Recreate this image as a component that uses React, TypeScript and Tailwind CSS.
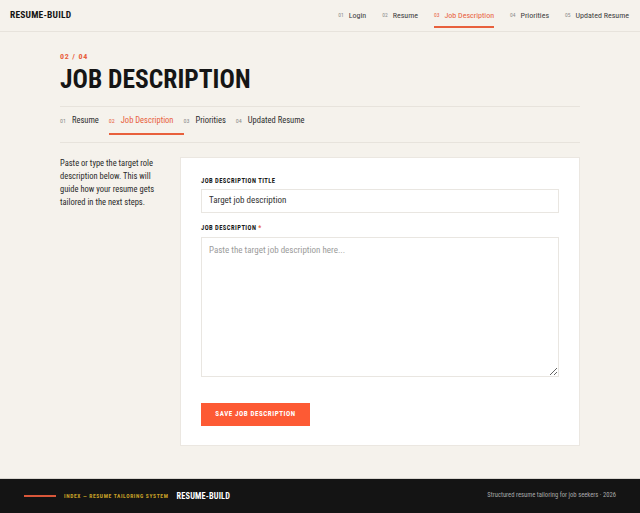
const HEADER_STEPS = [
  { num: "01", label: "Login" },
  { num: "02", label: "Resume" },
  { num: "03", label: "Job Description", active: true },
  { num: "04", label: "Priorities" },
  { num: "05", label: "Updated Resume" },
]

const FLOW_TABS = [
  { num: "01", label: "Resume" },
  { num: "02", label: "Job Description", active: true },
  { num: "03", label: "Priorities" },
  { num: "04", label: "Updated Resume" },
]

function SiteHeader() {
  return (
    <header className="flex h-8 items-center justify-between border-b border-[#e7e3dc] pl-2.5 pr-[11px]">
      <span className="text-[9.5px] font-bold tracking-[0.02em] text-[#141414]">RESUME-BUILD</span>
      <nav className="flex items-center gap-4">
        {HEADER_STEPS.map((s) => (
          <span
            key={s.num}
            className={`mt-[2px] flex h-[22px] items-center gap-[5px] border-b-2 ${
              s.active ? "border-[#e8603c] text-[#e8603c]" : "border-transparent text-[#3d3d3d]"
            }`}
          >
            <span className={`text-[5.5px] ${s.active ? "text-[#e8603c]" : "text-[#8a8a8a]"}`}>{s.num}</span>
            <span className="text-[8px]">{s.label}</span>
          </span>
        ))}
      </nav>
    </header>
  )
}

function StepTabs() {
  return (
    <div className="mt-[13px] flex border-y border-[#e7e3dc] pb-[7px]">
      {FLOW_TABS.map((t) => (
        <span
          key={t.num}
          className={`flex h-7 items-center gap-[6px] border-b-2 pt-[2px] pr-[10px] ${
            t.active ? "border-[#e8603c] text-[#e8603c]" : "border-transparent text-[#2e2e2e]"
          }`}
        >
          <span className={`text-[6px] ${t.active ? "text-[#e8603c]" : "text-[#8a8a8a]"}`}>{t.num}</span>
          <span className="text-[8.5px]">{t.label}</span>
        </span>
      ))}
    </div>
  )
}

function JobForm() {
  return (
    <section className="w-[400px] border border-[#ebe7e1] bg-white px-5 pt-[19px] pb-[19px]">
      <label className="block text-[6.5px] leading-[9px] font-bold tracking-[0.07em] text-[#1a1a1a]">
        JOB DESCRIPTION TITLE
      </label>
      <div className="mt-[3px] flex h-6 items-center border border-[#e9e6e1] px-[7px] text-[9px] text-[#333333]">
        Target job description
      </div>

      <label className="mt-[11px] block text-[6.5px] leading-[9px] font-bold tracking-[0.07em] text-[#1a1a1a]">
        JOB DESCRIPTION <span className="text-[#e8603c]">*</span>
      </label>
      <textarea
        readOnly
        placeholder="Paste the target job description here..."
        className="mt-[4px] block h-[140px] w-full border border-[#e9e6e1] px-[7px] py-[6px] text-[9px] text-[#333333] placeholder:text-[#9b9b9b] focus:outline-none"
      />

      <button
        type="button"
        className="mt-[26px] block h-[23px] w-[109px] bg-[#fd5a34] text-[7px] font-bold tracking-[0.08em] text-white"
      >
        SAVE JOB DESCRIPTION
      </button>
    </section>
  )
}

function SiteFooter() {
  return (
    <footer className="flex h-[35px] items-center justify-between border-t border-[#d9d6d0] bg-[#141414] px-6">
      <div className="flex items-center">
        <span className="h-[2px] w-8 bg-[#d9573a]" />
        <span className="ml-2 text-[5.5px] font-bold tracking-[0.12em] text-[#c9a227]">
          INDEX — RESUME TAILORING SYSTEM
        </span>
        <span className="ml-2 text-[8.3px] font-bold tracking-[0.02em] text-white">RESUME-BUILD</span>
      </div>
      <span className="text-[6.6px] text-[#a8a8a8]">Structured resume tailoring for job seekers · 2026</span>
    </footer>
  )
}

export default function App() {
  return (
    <div
      className="flex min-h-screen flex-col bg-[#f5f2ec]"
      style={{ fontFamily: '"Roboto Condensed", "Liberation Sans", sans-serif' }}
    >
      <SiteHeader />
      <main className="mx-auto w-[520px] flex-1 pt-[19px] pb-8">
        <p className="text-[8px] font-bold tracking-[0.1em] text-[#e8603c]">02 / 04</p>
        <h1 className="mt-[4px] text-[25.5px] leading-none font-bold text-[#151515]">JOB DESCRIPTION</h1>
        <StepTabs />
        <div className="mt-[14px] flex gap-5">
          <p className="w-[100px] text-[8.5px] leading-[13px] text-[#2a2a2a]">
            Paste or type the target role description below. This will guide how your resume gets tailored in the next
            steps.
          </p>
          <JobForm />
        </div>
      </main>
      <SiteFooter />
    </div>
  )
}
